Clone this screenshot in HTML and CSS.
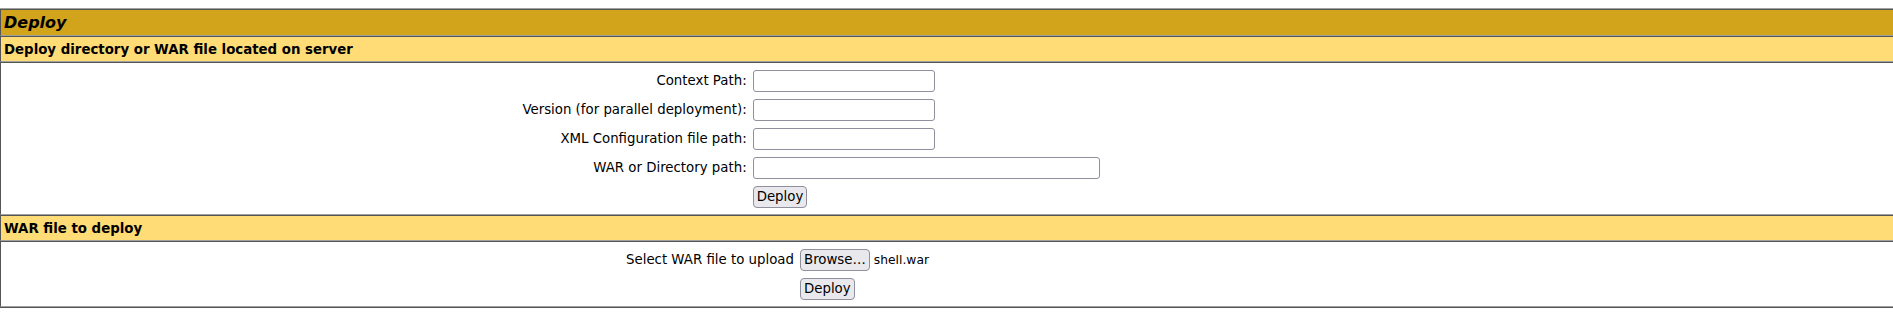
FILE: index.html
```html
<!DOCTYPE html>
<html lang="en">
<head>
  <meta charset="UTF-8" />
  <title>Tomcat Web Application Manager</title>
  <link rel="stylesheet" href="styles.css">
</head>
<body>
  <table class="panel">
    <tr>
      <td class="title">Deploy</td>
    </tr>
    <tr>
      <td class="header-left"><small>Deploy directory or WAR file located on server</small></td>
    </tr>
    <tr>
      <td class="section">
        <div class="form-area">
          <form class="form-grid">
            <div class="row-right">Context Path:</div>
            <div class="row-left"><input class="text-input" type="text" name="deployPath"></div>

            <div class="row-right">Version (for parallel deployment):</div>
            <div class="row-left"><input class="text-input" type="text" name="deployVersion"></div>

            <div class="row-right">XML Configuration file path:</div>
            <div class="row-left"><input class="text-input" type="text" name="deployConfig"></div>

            <div class="row-right">WAR or Directory path:</div>
            <div class="row-left"><input class="text-input wide" type="text" name="deployWar"></div>

            <div class="row-right"></div>
            <div class="row-left"><button class="btn" type="button">Deploy</button></div>
          </form>
        </div>
      </td>
    </tr>
    <tr>
      <td class="header-left"><small>WAR file to deploy</small></td>
    </tr>
    <tr>
      <td class="section">
        <div class="form-area">
          <form class="form-grid">
            <div class="row-right">Select WAR file to upload</div>
            <div class="row-left">
              <span class="file-input">
                <button class="btn" type="button">Browse…</button>
                <span class="file-name">shell.war</span>
              </span>
            </div>

            <div class="row-right"></div>
            <div class="row-left"><button class="btn" type="button">Deploy</button></div>
          </form>
        </div>
      </td>
    </tr>
  </table>
</body>
</html>
```

FILE: styles.css
```css
* { box-sizing: border-box; }
body {
  margin: 8px 0 0;
  background: #ffffff;
  color: #000000;
  font-family: "DejaVu Sans", sans-serif;
  font-size: 16px;
  overflow: hidden;
}
small { font-size: 13.33px; }

/* outer table, border="1" look */
.panel {
  width: 1960px;
  margin-left: -1px;
  border-collapse: separate;
  border-spacing: 0;
  border-top: 1px solid #a0a0a0;
  border-left: 1px solid #a0a0a0;
  border-bottom: 1px solid #555555;
  border-right: 1px solid #555555;
}
.panel td {
  padding: 3px;
  border-top: 1px solid #555555;
  border-left: 1px solid #555555;
  border-bottom: 1px solid #a0a0a0;
  border-right: 1px solid #a0a0a0;
}
.title {
  background: #d2a41c;
  font-weight: bold;
  font-style: italic;
  font-size: 16px;
  line-height: 19px;
  text-align: left;
}
.header-left {
  background: #ffdc75;
  font-weight: bold;
  line-height: 17px;
  text-align: left;
}
.section { background: #ffffff; }

.form-area { width: 1614px; }
.form-grid {
  display: grid;
  grid-template-columns: auto auto;
  grid-auto-rows: 29px;
  align-items: center;
  width: max-content;
  margin: 0 auto;
}
.row-right {
  padding: 0 3px;
  text-align: right;
  font-size: 13.33px;
  line-height: 23px;
}
.row-left {
  padding: 0 3px;
  display: flex;
  align-items: center;
  height: 29px;
}

.text-input {
  width: 182px;
  height: 22px;
  border: 1px solid #8f8f9d;
  border-radius: 3px;
  background: #ffffff;
  font: 13.33px "DejaVu Sans", sans-serif;
  padding: 1px 3px;
}
.text-input.wide { width: 347px; }

.btn {
  height: 22px;
  padding: 0 3px;
  border: 1px solid #8f8f9d;
  border-radius: 4px;
  background: #e9e9ed;
  color: #000000;
  font: 13.33px "DejaVu Sans", sans-serif;
}

.file-input {
  width: 196px;
  display: flex;
  align-items: center;
  gap: 4px;
}
.file-name { font-size: 12.3px; }
```
